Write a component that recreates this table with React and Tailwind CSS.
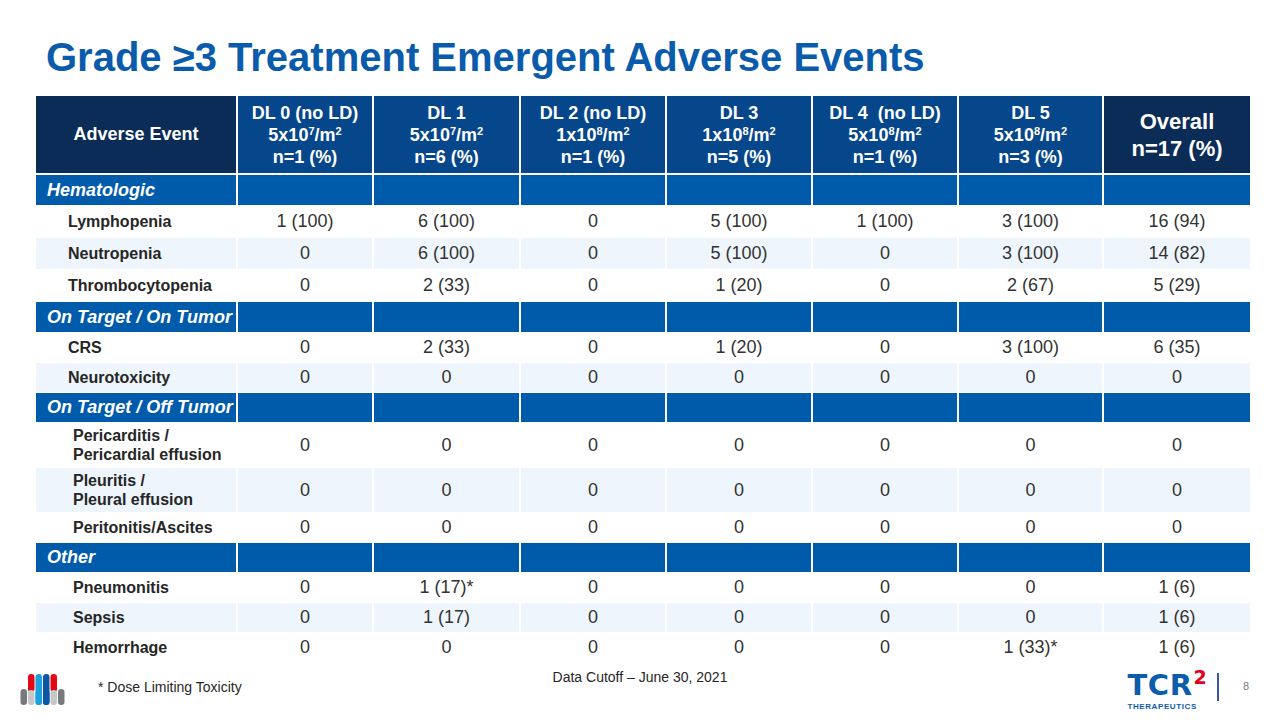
import React from 'react';

const GRID = 'grid grid-cols-[200px_134px_145px_144px_144px_144px_143px_146px] gap-x-[2px]';

const sections = [
  {
    name: 'Hematologic',
    h: 'h-[30px]',
    rows: [
      { label: ['Lymphopenia'], vals: ['1 (100)', '6 (100)', '0', '5 (100)', '1 (100)', '3 (100)', '16 (94)'], h: 'h-[31px]', pad: 'pl-[32px]' },
      { label: ['Neutropenia'], vals: ['0', '6 (100)', '0', '5 (100)', '0', '3 (100)', '14 (82)'], h: 'h-[31px]', pad: 'pl-[32px]' },
      { label: ['Thrombocytopenia'], vals: ['0', '2 (33)', '0', '1 (20)', '0', '2 (67)', '5 (29)'], h: 'h-[31px]', pad: 'pl-[32px]' },
    ],
  },
  {
    name: 'On Target / On Tumor',
    h: 'h-[30px]',
    rows: [
      { label: ['CRS'], vals: ['0', '2 (33)', '0', '1 (20)', '0', '3 (100)', '6 (35)'], h: 'h-[29px]', pad: 'pl-[32px]' },
      { label: ['Neurotoxicity'], vals: ['0', '0', '0', '0', '0', '0', '0'], h: 'h-[29px]', pad: 'pl-[32px]' },
    ],
  },
  {
    name: 'On Target / Off Tumor',
    h: 'h-[29px]',
    rows: [
      { label: ['Pericarditis /', 'Pericardial effusion'], vals: ['0', '0', '0', '0', '0', '0', '0'], h: 'h-[44px]', pad: 'pl-[37px]' },
      { label: ['Pleuritis /', 'Pleural effusion'], vals: ['0', '0', '0', '0', '0', '0', '0'], h: 'h-[44px]', pad: 'pl-[37px]' },
      { label: ['Peritonitis/Ascites'], vals: ['0', '0', '0', '0', '0', '0', '0'], h: 'h-[29px]', pad: 'pl-[37px]' },
    ],
  },
  {
    name: 'Other',
    h: 'h-[29px]',
    rows: [
      { label: ['Pneumonitis'], vals: ['0', '1 (17)*', '0', '0', '0', '0', '1 (6)'], h: 'h-[29px]', pad: 'pl-[37px]' },
      { label: ['Sepsis'], vals: ['0', '1 (17)', '0', '0', '0', '0', '1 (6)'], h: 'h-[29px]', pad: 'pl-[37px]' },
      { label: ['Hemorrhage'], vals: ['0', '0', '0', '0', '0', '1 (33)*', '1 (6)'], h: 'h-[29px]', pad: 'pl-[37px]' },
    ],
  },
];

const doses = [
  { dl: 'DL 0 (no LD)', base: '5x10', exp: '7', n: 'n=1 (%)' },
  { dl: 'DL 1', base: '5x10', exp: '7', n: 'n=6 (%)' },
  { dl: 'DL 2 (no LD)', base: '1x10', exp: '8', n: 'n=1 (%)' },
  { dl: 'DL 3', base: '1x10', exp: '8', n: 'n=5 (%)' },
  { dl: 'DL 4  (no LD)', base: '5x10', exp: '8', n: 'n=1 (%)' },
  { dl: 'DL 5', base: '5x10', exp: '8', n: 'n=3 (%)' },
];

const PillLogo = () => (
  <svg width="46" height="33" viewBox="0 0 46 33">
    {/* top row */}
    <rect x="8" y="1" width="6.5" height="18" rx="3.2" fill="#e30613" />
    <rect x="15.5" y="1" width="6.5" height="31" rx="3.2" fill="#1ba1de" />
    <rect x="23" y="1" width="6.5" height="31" rx="3.2" fill="#0b57a4" />
    <rect x="30.5" y="1" width="6.5" height="18" rx="3.2" fill="#e30613" />
    {/* bottom row */}
    <rect x="0.5" y="16" width="6.5" height="16" rx="3.2" fill="#77797d" />
    <rect x="8" y="17" width="6.5" height="15" rx="3.2" fill="#c5c7c9" />
    <rect x="15.5" y="17" width="6.5" height="15" rx="3.2" fill="#1ba1de" />
    <rect x="23" y="17" width="6.5" height="15" rx="3.2" fill="#0b57a4" />
    <rect x="30.5" y="17" width="6.5" height="15" rx="3.2" fill="#c5c7c9" />
    <rect x="38" y="16" width="6.5" height="16" rx="3.2" fill="#77797d" />
  </svg>
);

export default function App() {
  return (
    <div className="w-[1280px] h-[720px] bg-white flex flex-col font-['Liberation_Sans',Arial,sans-serif] overflow-hidden">
      <h1 className="pl-[46px] pt-[37px] text-[40px] leading-[40px] font-bold text-[#0a5bab]">
        Grade ≥3 Treatment Emergent Adverse Events
      </h1>

      {/* Table */}
      <div className="ml-[36px] mt-[19px] w-[1214px] flex flex-col gap-y-px">
        <div className={`${GRID} h-[77px] mb-px`}>
          <div className="bg-[#0b2c56] flex items-center justify-center text-white font-bold text-[18px]">Adverse Event</div>
          {doses.map((d) => (
            <div key={d.dl} className="bg-[#06468b] flex flex-col items-center justify-center text-white font-bold text-[18px] leading-[22px] whitespace-pre">
              <span>{d.dl}</span>
              <span>{d.base}<sup className="text-[11px]">{d.exp}</sup>/m<sup className="text-[11px]">2</sup></span>
              <span>{d.n}</span>
            </div>
          ))}
          <div className="bg-[#0b2c56] flex flex-col items-center justify-center text-white font-bold text-[22px] leading-[27px]">
            <span>Overall</span>
            <span>n=17 (%)</span>
          </div>
        </div>

        {sections.map((s) => (
          <React.Fragment key={s.name}>
            <div className={`${GRID} ${s.h}`}>
              <div className="bg-[#005bab] flex items-center pl-[11px] text-white font-bold italic text-[18px]">{s.name}</div>
              {[0, 1, 2, 3, 4, 5, 6].map((i) => (
                <div key={i} className="bg-[#005bab]" />
              ))}
            </div>
            {s.rows.map((r, ri) => {
              const bg = ri % 2 === 1 ? 'bg-[#eef5fc]' : 'bg-white';
              return (
                <div key={r.label[0]} className={`${GRID} ${r.h}`}>
                  <div className={`${bg} ${r.pad} flex flex-col justify-center text-[16px] leading-[19px] font-bold text-[#262626]`}>
                    {r.label.map((l) => (
                      <span key={l}>{l}</span>
                    ))}
                  </div>
                  {r.vals.map((v, vi) => (
                    <div key={vi} className={`${bg} flex items-center justify-center text-[18px] text-[#333333]`}>
                      {v}
                    </div>
                  ))}
                </div>
              );
            })}
          </React.Fragment>
        ))}
      </div>

      {/* Footer */}
      <div className="flex flex-1 items-start">
        <div className="w-[540px] flex items-start">
          <div className="ml-[20px] mt-[11px]">
            <PillLogo />
          </div>
          <span className="ml-[32px] mt-[17px] text-[14px] leading-[16px] text-[#262626]">* Dose Limiting Toxicity</span>
        </div>
        <div className="w-[200px] mt-[7px] text-center text-[14px] leading-[16px] text-[#262626]">
          Data Cutoff – June 30, 2021
        </div>
        <div className="ml-auto mr-[31px] mt-[6px] flex items-start">
          <div className="flex flex-col items-center">
            <div className="flex items-start leading-none">
              <span className="font-['DejaVu_Sans',sans-serif] text-[29px] font-bold text-[#0b5cab] tracking-[0.5px] mt-[3px]">TCR</span>
              <span className="font-['DejaVu_Sans',sans-serif] text-[19px] font-bold text-[#e3001b] ml-[1px]">2</span>
            </div>
            <span className="mt-[2px] mr-[10px] text-[8px] leading-[9px] font-bold tracking-[0.6px] text-[#0b5cab]">THERAPEUTICS</span>
          </div>
          <div className="ml-[10px] mt-[5px] w-[2px] h-[28px] bg-[#3a55a5]" />
          <span className="ml-[24px] mt-[12px] text-[11px] leading-[12px] text-[#777777]">8</span>
        </div>
      </div>
    </div>
  );
}
